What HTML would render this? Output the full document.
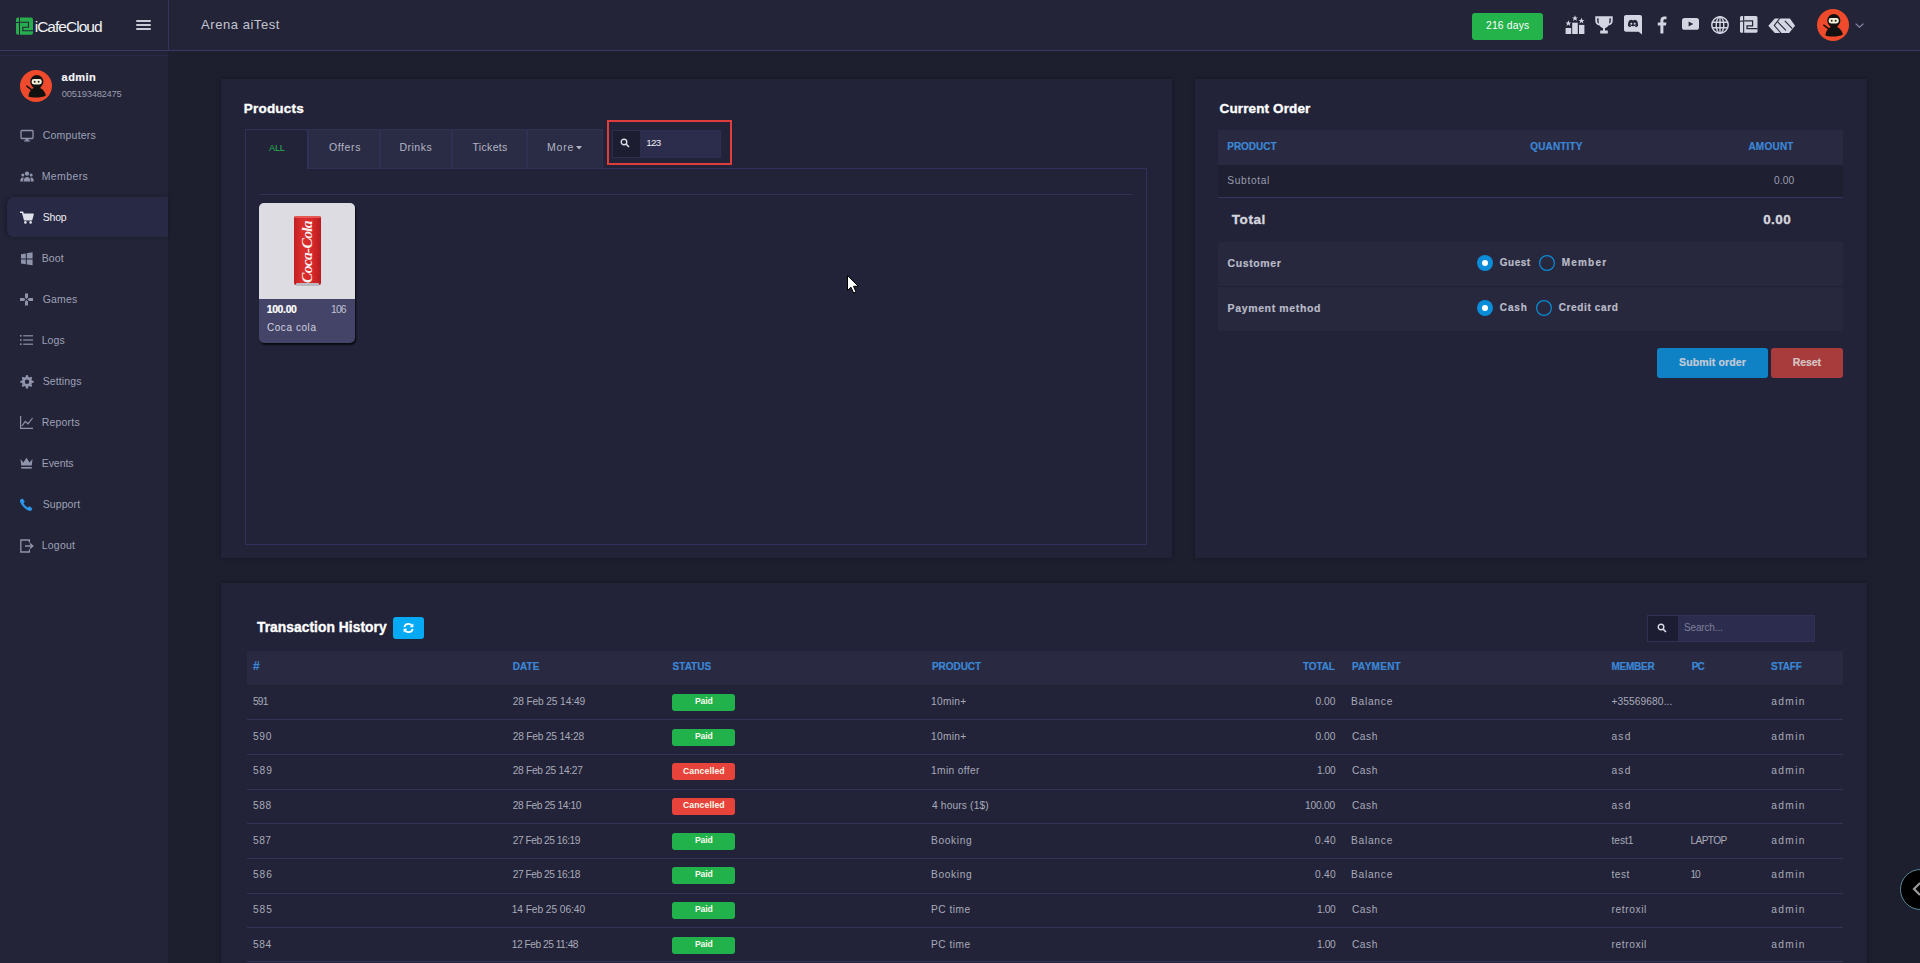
<!DOCTYPE html><html><head><meta charset="utf-8"><style>
html,body{margin:0;padding:0;width:1920px;height:963px;overflow:hidden;background:#1d1e2e;}
body{position:relative;font-family:"Liberation Sans",sans-serif;}
.t{position:absolute;white-space:nowrap;line-height:1;}
.r{position:absolute;box-sizing:border-box;}
svg{position:absolute;overflow:visible;}
</style></head><body>
<div class="r" style="left:0px;top:0px;width:1920px;height:50px;background:#232438;"></div>
<div class="r" style="left:0px;top:50px;width:1920px;height:1px;background:#393966;"></div>
<div class="r" style="left:168px;top:0px;width:1px;height:50px;background:#34335c;"></div>
<svg style="left:16px;top:17px" width="18" height="18" viewBox="0 0 18 18">
<rect x="0" y="0.5" width="17" height="17.3" rx="2" fill="#27ad4e"/>
<rect x="3" y="0" width="1" height="18" fill="#232438"/>
<rect x="0" y="5" width="3" height="1" fill="#232438"/>
<path d="M4 5.2 H12.5 V10.2 H6.8 V13.8 H17" fill="none" stroke="#232438" stroke-width="1.1"/>
</svg>
<div class="t" style="left:34.70px;top:19px;font-size:15.5px;font-weight:400;color:#f2f2f5;letter-spacing:-0.978px;">iCafeCloud</div>
<div class="r" style="left:136px;top:20px;width:15px;height:2px;background:#c9cbd6;border-radius:1px;"></div>
<div class="r" style="left:136px;top:24px;width:15px;height:2px;background:#c9cbd6;border-radius:1px;"></div>
<div class="r" style="left:136px;top:28px;width:15px;height:2px;background:#c9cbd6;border-radius:1px;"></div>
<div class="t" style="left:201.10px;top:18px;font-size:13px;font-weight:400;color:#c3c5d0;letter-spacing:0.545px;">Arena aiTest</div>
<div class="r" style="left:1472px;top:13px;width:71px;height:27px;background:#24b24b;border-radius:3px;"></div>
<div class="t" style="left:1486.00px;top:21px;font-size:10.3px;font-weight:400;color:#ffffff;letter-spacing:0.2px;">216 days</div>
<div class="r" style="left:0px;top:51px;width:168px;height:912px;background:#232438;"></div>
<div class="r" style="left:0px;top:51px;width:168px;height:4px;background:#212236;"></div>
<div class="r" style="left:0px;top:55px;width:168px;height:1px;background:#27284a;"></div>
<svg style="left:20px;top:70px" width="32" height="32" viewBox="0 0 32 32">
<circle cx="16" cy="16" r="16" fill="#ee4a2b"/>
<path d="M8.4 26.4 C9.2 20.6 12.4 17.6 16.9 17.6 C21.2 17.6 24.6 20.6 25.8 25.4 C22 27.8 12.5 28 8.4 26.4 Z" fill="#111"/><rect x="13.4" y="14.5" width="7" height="4.5" fill="#111"/>
<circle cx="16.8" cy="11.6" r="6.6" fill="#111"/>
<rect x="11.6" y="9" width="10.2" height="5.4" rx="2.4" fill="#f4efd9"/>
<circle cx="14.7" cy="11.8" r="1" fill="#222"/>
<circle cx="18.6" cy="11.8" r="1" fill="#222"/>
<path d="M6.8 16.2 L12.6 20.6" stroke="#111" stroke-width="1.5" stroke-linecap="round"/>
</svg>
<div class="t" style="left:61.60px;top:72px;font-size:11px;font-weight:700;color:#f5f5f8;letter-spacing:0.45px;-webkit-text-stroke:0.2px #f5f5f8;">admin</div>
<div class="t" style="left:61.80px;top:89px;font-size:9.4px;font-weight:400;color:#9a9cae;letter-spacing:-0.236px;">005193482475</div>
<div class="r" style="left:7px;top:197px;width:161px;height:40px;background:#282a45;border-radius:7px 0 0 7px;box-shadow:-1px 0 4px rgba(10,10,20,0.35);"></div>
<svg style="left:20px;top:128.5px" width="14" height="14" viewBox="0 0 14 14"><rect x="1" y="1.5" width="12" height="8" rx="0.8" fill="none" stroke="#8f93ab" stroke-width="1.3"/><path d="M5.5 10 V11.5 H4 V12.5 H10 V11.5 H8.5 V10" fill="#8f93ab"/></svg>
<div class="t" style="left:42.70px;top:130px;font-size:10.5px;font-weight:400;color:#9ea1b6;letter-spacing:0.225px;">Computers</div>
<svg style="left:20px;top:169.5px" width="14" height="14" viewBox="0 0 14 14"><circle cx="7" cy="3.6" r="2.2" fill="#8f93ab"/><circle cx="2.8" cy="5" r="1.5" fill="#8f93ab"/><circle cx="11.2" cy="5" r="1.5" fill="#8f93ab"/><path d="M3.6 11.5 C3.8 8.2 5.2 7 7 7 C8.8 7 10.2 8.2 10.4 11.5 Z" fill="#8f93ab"/><path d="M0.2 11.5 C0.3 9 1.2 7.6 2.8 7.6 C3.3 7.6 3.6 7.8 3.8 8 C3.2 9 3 10.2 3 11.5 Z" fill="#8f93ab"/><path d="M13.8 11.5 C13.7 9 12.8 7.6 11.2 7.6 C10.7 7.6 10.4 7.8 10.2 8 C10.8 9 11 10.2 11 11.5 Z" fill="#8f93ab"/></svg>
<div class="t" style="left:41.70px;top:171px;font-size:10.5px;font-weight:400;color:#9ea1b6;letter-spacing:0.4px;">Members</div>
<svg style="left:20px;top:210.5px" width="14" height="14" viewBox="0 0 14 14"><path d="M0 1.2 H2.6 L4.6 8.6 H11.6 L13 3.2 H3.6" fill="none" stroke="#dfe1ea" stroke-width="1.6" stroke-linejoin="round"/><path d="M3.4 3.2 H13 L11.6 8.6 H4.6 Z" fill="#dfe1ea"/><circle cx="5.4" cy="11.4" r="1.3" fill="#dfe1ea"/><circle cx="10.6" cy="11.4" r="1.3" fill="#dfe1ea"/></svg>
<div class="t" style="left:42.70px;top:212px;font-size:10.5px;font-weight:400;color:#ecedf2;letter-spacing:-0.2px;">Shop</div>
<svg style="left:20px;top:251.5px" width="14" height="14" viewBox="0 0 14 14"><path d="M1 2.2 L5.8 1.4 V6.4 H1 Z M6.8 1.2 L12.6 0.3 V6.4 H6.8 Z M1 7.4 H5.8 V12.2 L1 11.4 Z M6.8 7.4 H12.6 V13.2 L6.8 12.4 Z" fill="#8f93ab"/></svg>
<div class="t" style="left:41.70px;top:253px;font-size:10.5px;font-weight:400;color:#9ea1b6;letter-spacing:0.133px;">Boot</div>
<svg style="left:20px;top:292.5px" width="14" height="14" viewBox="0 0 14 14"><path d="M5 0.5 H8 V4.5 L6.5 6 L5 4.5 Z M5 12.5 H8 V8.5 L6.5 7 L5 8.5 Z M0 5 V8 H4 L5.5 6.5 L4 5 Z M13 5 V8 H9 L7.5 6.5 L9 5 Z" fill="#8f93ab"/></svg>
<div class="t" style="left:42.70px;top:294px;font-size:10.5px;font-weight:400;color:#9ea1b6;letter-spacing:0.15px;">Games</div>
<svg style="left:20px;top:333.5px" width="14" height="14" viewBox="0 0 14 14"><rect x="0" y="1" width="1.6" height="1.6" fill="#8f93ab"/><rect x="0" y="5.2" width="1.6" height="1.6" fill="#8f93ab"/><rect x="0" y="9.4" width="1.6" height="1.6" fill="#8f93ab"/><rect x="3.2" y="1.2" width="9.8" height="1.2" fill="#8f93ab"/><rect x="3.2" y="5.4" width="9.8" height="1.2" fill="#8f93ab"/><rect x="3.2" y="9.6" width="9.8" height="1.2" fill="#8f93ab"/></svg>
<div class="t" style="left:41.70px;top:335px;font-size:10.5px;font-weight:400;color:#9ea1b6;letter-spacing:0.067px;">Logs</div>
<svg style="left:20px;top:374.5px" width="14" height="14" viewBox="0 0 14 14"><path d="M6.5 0 L8 0.2 L8.4 2 L9.6 2.6 L11.2 1.7 L12.3 2.8 L11.4 4.4 L12 5.6 L13.8 6 V7.6 L12 8 L11.4 9.2 L12.3 10.8 L11.2 11.9 L9.6 11 L8.4 11.6 L8 13.4 H6 L5.6 11.6 L4.4 11 L2.8 11.9 L1.7 10.8 L2.6 9.2 L2 8 L0.2 7.6 V6 L2 5.6 L2.6 4.4 L1.7 2.8 L2.8 1.7 L4.4 2.6 L5.6 2 L6 0.2 Z M7 4.6 A2.2 2.2 0 1 0 7 9 A2.2 2.2 0 1 0 7 4.6 Z" fill="#8f93ab" fill-rule="evenodd"/></svg>
<div class="t" style="left:42.70px;top:376px;font-size:10.5px;font-weight:400;color:#9ea1b6;letter-spacing:0.114px;">Settings</div>
<svg style="left:20px;top:415.5px" width="14" height="14" viewBox="0 0 14 14"><path d="M0.6 0 V12.4 H13" fill="none" stroke="#8f93ab" stroke-width="1.2"/><path d="M2 10 L5.2 5.4 L8 7.8 L12.6 2" fill="none" stroke="#8f93ab" stroke-width="1.2"/></svg>
<div class="t" style="left:41.70px;top:417px;font-size:10.5px;font-weight:400;color:#9ea1b6;letter-spacing:0.2px;">Reports</div>
<svg style="left:20px;top:456.5px" width="14" height="14" viewBox="0 0 14 14"><path d="M0.5 2 L3.4 5.4 L6.5 0.8 L9.6 5.4 L12.5 2 L11.8 8.6 H1.2 Z" fill="#8f93ab"/><rect x="1.2" y="10" width="10.6" height="1.6" fill="#8f93ab"/></svg>
<div class="t" style="left:41.70px;top:458px;font-size:10.5px;font-weight:400;color:#9ea1b6;letter-spacing:-0.04px;">Events</div>
<svg style="left:20px;top:497.5px" width="14" height="14" viewBox="0 0 14 14"><path d="M2.6 0.6 L4.8 3.6 L3.6 5.2 C4.4 7 6 8.6 7.8 9.4 L9.4 8.2 L12.4 10.4 L11.4 12.6 C10.8 13.2 9.6 13.2 8.4 12.6 C5 11 2 8 0.4 4.6 C-0.2 3.4 -0.2 2.2 0.4 1.6 Z" fill="#2d95ea"/></svg>
<div class="t" style="left:42.70px;top:499px;font-size:10.5px;font-weight:400;color:#9ea1b6;letter-spacing:0.1px;">Support</div>
<svg style="left:20px;top:538.5px" width="14" height="14" viewBox="0 0 14 14"><path d="M9.4 3.6 V1 H0.8 V13 H9.4 V10.4" fill="none" stroke="#8f93ab" stroke-width="1.3"/><path d="M5 7 H12.6 M10 4.4 L12.8 7 L10 9.6" fill="none" stroke="#8f93ab" stroke-width="1.4"/></svg>
<div class="t" style="left:41.70px;top:540px;font-size:10.5px;font-weight:400;color:#9ea1b6;letter-spacing:0.24px;">Logout</div>
<div class="r" style="left:221px;top:78.5px;width:951px;height:479.5px;background:#222338;box-shadow:0 0 4px rgba(8,8,16,0.35);"></div>
<div class="t" style="left:243.80px;top:102px;font-size:13.5px;font-weight:700;color:#ffffff;letter-spacing:0.2px;-webkit-text-stroke:0.35px #ffffff;">Products</div>
<div class="r" style="left:245px;top:168px;width:902px;height:377px;background:transparent;border:1px solid #30305a;border-top:none;"></div>
<div class="r" style="left:308px;top:168px;width:839px;height:1px;background:#30305a;"></div>
<div class="r" style="left:245px;top:129px;width:63px;height:40px;background:#222338;border:1px solid #30305a;border-bottom:none;"></div>
<div class="t" style="left:269.00px;top:144px;font-size:9.2px;font-weight:400;color:#27b34d;letter-spacing:-0.2px;">ALL</div>
<div class="r" style="left:308px;top:129px;width:72px;height:40px;background:#2a2c45;border:1px solid #2f3150;"></div>
<div class="r" style="left:380px;top:129px;width:72px;height:40px;background:#2a2c45;border:1px solid #2f3150;"></div>
<div class="r" style="left:452px;top:129px;width:75px;height:40px;background:#2a2c45;border:1px solid #2f3150;"></div>
<div class="r" style="left:527px;top:129px;width:76px;height:40px;background:#2a2c45;border:1px solid #2f3150;"></div>
<div class="t" style="left:329.00px;top:142px;font-size:10.5px;font-weight:400;color:#b3b5c4;letter-spacing:0.6px;">Offers</div>
<div class="t" style="left:399.40px;top:142px;font-size:10.5px;font-weight:400;color:#b3b5c4;letter-spacing:0.52px;">Drinks</div>
<div class="t" style="left:472.50px;top:142px;font-size:10.5px;font-weight:400;color:#b3b5c4;letter-spacing:0.333px;">Tickets</div>
<div class="t" style="left:547.00px;top:142px;font-size:10.5px;font-weight:400;color:#b3b5c4;letter-spacing:0.8px;">More</div>
<svg style="left:576px;top:146px" width="6" height="4" viewBox="0 0 6 4"><path d="M0 0 H6 L3 3.4 Z" fill="#b3b5c4"/></svg>
<div class="r" style="left:607px;top:120px;width:125px;height:44.5px;background:transparent;border:2px solid #e03c3c;"></div>
<div class="r" style="left:612px;top:129.5px;width:28px;height:28px;background:#1c1d31;border:1px solid #2e2f50;border-right:none;"></div>
<div class="r" style="left:640px;top:129.5px;width:80.5px;height:28px;background:#2c2d4d;border:1px solid #2e2f50;border-left:none;"></div>
<svg style="left:620px;top:138px" width="10" height="10" viewBox="0 0 10 10"><circle cx="4" cy="4" r="2.8" fill="none" stroke="#d9dbe6" stroke-width="1.4"/><path d="M6.1 6.1 L9 9" stroke="#d9dbe6" stroke-width="1.6"/></svg>
<div class="t" style="left:646.20px;top:138px;font-size:9.8px;font-weight:400;color:#f0f0f4;letter-spacing:-0.7px;">123</div>
<div class="r" style="left:259px;top:194px;width:874px;height:1px;background:#2f3053;"></div>
<div class="r" style="left:259px;top:203px;width:96px;height:140px;border-radius:5px;overflow:hidden;box-shadow:1px 2px 2px rgba(0,0,0,0.75);background:#434467;"></div>
<div class="r" style="left:259px;top:203px;width:96px;height:96px;background:#dcdce2;border-radius:5px 5px 0 0;"></div>
<svg style="left:293.5px;top:216px" width="27" height="70" viewBox="0 0 27 70">
<defs><linearGradient id="cg" x1="0" x2="1" y1="0" y2="0"><stop offset="0" stop-color="#c21e22"/><stop offset="0.3" stop-color="#dc2e2c"/><stop offset="0.7" stop-color="#d6282a"/><stop offset="1" stop-color="#b81a1e"/></linearGradient></defs>
<rect x="0" y="0" width="27" height="69" rx="2" fill="url(#cg)"/>
<rect x="0.5" y="0" width="26" height="2" rx="1" fill="#e65a55"/>
<rect x="2" y="67" width="23" height="3" rx="1" fill="#b9b9c2"/>
</svg>
<div class="t" style="left:267px;top:244px;width:80px;height:16px;transform:rotate(-90deg);transform-origin:40px 8px;font-family:'Liberation Serif',serif;font-style:italic;font-weight:700;font-size:15.5px;line-height:16px;letter-spacing:-0.7px;color:#f6f0f0;text-align:center;">Coca-Cola</div>
<div class="t" style="left:266.70px;top:305px;font-size:10.4px;font-weight:700;color:#ffffff;letter-spacing:-0.32px;-webkit-text-stroke:0.2px #ffffff;">100.00</div>
<div class="t" style="left:331.00px;top:305px;font-size:10.4px;font-weight:400;color:#c0c2d2;letter-spacing:-0.9px;">106</div>
<div class="t" style="left:266.90px;top:323px;font-size:10px;font-weight:400;color:#d2d4e0;letter-spacing:0.575px;">Coca cola</div>
<div class="r" style="left:1195px;top:78.5px;width:672px;height:479.5px;background:#222338;box-shadow:0 0 4px rgba(8,8,16,0.35);"></div>
<div class="t" style="left:1219.60px;top:102px;font-size:13.5px;font-weight:700;color:#ffffff;letter-spacing:0.117px;-webkit-text-stroke:0.35px #ffffff;">Current Order</div>
<div class="r" style="left:1218px;top:129.5px;width:625px;height:35.5px;background:#292a42;"></div>
<div class="t" style="left:1227.30px;top:142px;font-size:10px;font-weight:700;color:#3b87d6;letter-spacing:-0.033px;-webkit-text-stroke:0.2px #3b87d6;">PRODUCT</div>
<div class="t" style="left:1530.20px;top:142px;font-size:10px;font-weight:700;color:#3b87d6;letter-spacing:0.171px;-webkit-text-stroke:0.2px #3b87d6;">QUANTITY</div>
<div class="t" style="left:1748.40px;top:142px;font-size:10px;font-weight:700;color:#3b87d6;letter-spacing:0.24px;-webkit-text-stroke:0.2px #3b87d6;">AMOUNT</div>
<div class="r" style="left:1218px;top:165px;width:625px;height:32px;background:#1e1f31;"></div>
<div class="r" style="left:1218px;top:197px;width:625px;height:1px;background:#363760;"></div>
<div class="t" style="left:1227.30px;top:176px;font-size:10.2px;font-weight:400;color:#9a9cae;letter-spacing:0.657px;">Subtotal</div>
<div class="t" style="left:1774.00px;top:176px;font-size:10.2px;font-weight:400;color:#9a9cae;letter-spacing:0.133px;">0.00</div>
<div class="t" style="left:1231.80px;top:213px;font-size:13.5px;font-weight:700;color:#d4d5de;letter-spacing:0.55px;-webkit-text-stroke:0.35px #d4d5de;">Total</div>
<div class="t" style="left:1763.20px;top:213px;font-size:13.5px;font-weight:700;color:#d4d5de;letter-spacing:0.4px;-webkit-text-stroke:0.35px #d4d5de;">0.00</div>
<div class="r" style="left:1218px;top:242px;width:625px;height:89px;background:#27283d;"></div>
<div class="r" style="left:1218px;top:286px;width:625px;height:1px;background:#1f2033;"></div>
<div class="t" style="left:1227.60px;top:258px;font-size:10.5px;font-weight:700;color:#b9bbc8;letter-spacing:0.6px;-webkit-text-stroke:0.2px #b9bbc8;">Customer</div>
<div class="t" style="left:1227.60px;top:303px;font-size:10.5px;font-weight:700;color:#b9bbc8;letter-spacing:0.631px;-webkit-text-stroke:0.2px #b9bbc8;">Payment method</div>
<svg style="left:1477px;top:255px" width="16" height="16" viewBox="0 0 16 16"><circle cx="8" cy="8" r="8" fill="#0b8cd8"/><circle cx="8" cy="8" r="3" fill="#fff"/></svg>
<svg style="left:1538.8px;top:255px" width="16" height="16" viewBox="0 0 16 16"><circle cx="8" cy="8" r="7.4" fill="none" stroke="#0b8cd8" stroke-width="1.2"/></svg>
<svg style="left:1477px;top:300px" width="16" height="16" viewBox="0 0 16 16"><circle cx="8" cy="8" r="8" fill="#0b8cd8"/><circle cx="8" cy="8" r="3" fill="#fff"/></svg>
<svg style="left:1535.8px;top:300px" width="16" height="16" viewBox="0 0 16 16"><circle cx="8" cy="8" r="7.4" fill="none" stroke="#0b8cd8" stroke-width="1.2"/></svg>
<div class="t" style="left:1499.80px;top:258px;font-size:10px;font-weight:700;color:#b9bbc8;letter-spacing:0.5px;-webkit-text-stroke:0.2px #b9bbc8;">Guest</div>
<div class="t" style="left:1561.70px;top:258px;font-size:10px;font-weight:700;color:#b9bbc8;letter-spacing:1.2px;-webkit-text-stroke:0.2px #b9bbc8;">Member</div>
<div class="t" style="left:1499.80px;top:303px;font-size:10px;font-weight:700;color:#b9bbc8;letter-spacing:0.867px;-webkit-text-stroke:0.2px #b9bbc8;">Cash</div>
<div class="t" style="left:1558.75px;top:303px;font-size:10px;font-weight:700;color:#b9bbc8;letter-spacing:0.63px;-webkit-text-stroke:0.2px #b9bbc8;">Credit card</div>
<div class="r" style="left:1657px;top:348px;width:111px;height:30px;background:#0f82c6;border-radius:3px;"></div>
<div class="r" style="left:1771px;top:348px;width:72px;height:30px;background:#a83b3b;border-radius:3px;"></div>
<div class="t" style="left:1679.00px;top:357px;font-size:10.5px;font-weight:700;color:#c5cbd6;letter-spacing:0.145px;-webkit-text-stroke:0.2px #c5cbd6;">Submit order</div>
<div class="t" style="left:1792.70px;top:357px;font-size:10.5px;font-weight:700;color:#d6c6c6;letter-spacing:-0.1px;-webkit-text-stroke:0.2px #d6c6c6;">Reset</div>
<div class="r" style="left:221px;top:582.5px;width:1646px;height:420px;background:#222338;box-shadow:0 0 4px rgba(8,8,16,0.35);"></div>
<div class="t" style="left:257.00px;top:621px;font-size:13.8px;font-weight:700;color:#ffffff;letter-spacing:0.044px;-webkit-text-stroke:0.35px #ffffff;">Transaction History</div>
<div class="r" style="left:393px;top:617px;width:31px;height:22px;background:#05a9f4;border-radius:3px;"></div>
<svg style="left:403px;top:623px" width="11" height="10" viewBox="0 0 11 10">
<path d="M1.3 4 C1.8 1.8 3.4 0.8 5.4 0.8 C6.8 0.8 7.9 1.4 8.8 2.4" fill="none" stroke="#fff" stroke-width="1.7"/>
<path d="M10.4 0.4 V4.2 H6.6 Z" fill="#fff"/>
<path d="M9.7 6 C9.2 8.2 7.6 9.2 5.6 9.2 C4.2 9.2 3.1 8.6 2.2 7.6" fill="none" stroke="#fff" stroke-width="1.7"/>
<path d="M0.6 9.6 V5.8 H4.4 Z" fill="#fff"/>
</svg>
<div class="r" style="left:1647px;top:614.5px;width:168px;height:27px;background:#2c2d4e;border:1px solid #303153;"></div>
<div class="r" style="left:1647px;top:614.5px;width:31px;height:27px;background:#1c1d32;border:1px solid #303153;border-right:none;"></div>
<svg style="left:1657px;top:623px" width="10" height="10" viewBox="0 0 10 10"><circle cx="4" cy="4" r="2.8" fill="none" stroke="#d9dbe6" stroke-width="1.4"/><path d="M6.1 6.1 L9 9" stroke="#d9dbe6" stroke-width="1.6"/></svg>
<div class="t" style="left:1684.00px;top:623px;font-size:10px;font-weight:400;color:#7d7f98;letter-spacing:-0.15px;">Search...</div>
<div class="r" style="left:246.5px;top:650.5px;width:1596.5px;height:35px;background:#292a41;"></div>
<div class="r" style="left:246.5px;top:684.5px;width:1596.5px;height:1px;background:#1f2032;"></div>
<div class="t" style="left:253.00px;top:660px;font-size:12px;font-weight:700;color:#3b87d6;letter-spacing:3.0px;-webkit-text-stroke:0.2px #3b87d6;">#</div>
<div class="t" style="left:512.70px;top:662px;font-size:10px;font-weight:700;color:#3b87d6;letter-spacing:0.067px;-webkit-text-stroke:0.2px #3b87d6;">DATE</div>
<div class="t" style="left:672.60px;top:662px;font-size:10px;font-weight:700;color:#3b87d6;-webkit-text-stroke:0.2px #3b87d6;">STATUS</div>
<div class="t" style="left:931.90px;top:662px;font-size:10px;font-weight:700;color:#3b87d6;letter-spacing:-0.033px;-webkit-text-stroke:0.2px #3b87d6;">PRODUCT</div>
<div class="t" style="left:1303.10px;top:662px;font-size:10px;font-weight:700;color:#3b87d6;letter-spacing:-0.15px;-webkit-text-stroke:0.2px #3b87d6;">TOTAL</div>
<div class="t" style="left:1351.90px;top:662px;font-size:10px;font-weight:700;color:#3b87d6;letter-spacing:0.267px;-webkit-text-stroke:0.2px #3b87d6;">PAYMENT</div>
<div class="t" style="left:1611.50px;top:662px;font-size:10px;font-weight:700;color:#3b87d6;letter-spacing:-0.24px;-webkit-text-stroke:0.2px #3b87d6;">MEMBER</div>
<div class="t" style="left:1691.70px;top:662px;font-size:10px;font-weight:700;color:#3b87d6;letter-spacing:-0.8px;-webkit-text-stroke:0.2px #3b87d6;">PC</div>
<div class="t" style="left:1771.00px;top:662px;font-size:10px;font-weight:700;color:#3b87d6;letter-spacing:-0.15px;-webkit-text-stroke:0.2px #3b87d6;">STAFF</div>
<div class="t" style="left:253.00px;top:697px;font-size:10.2px;font-weight:400;color:#a8aab8;letter-spacing:-0.8px;">591</div>
<div class="t" style="left:512.70px;top:697px;font-size:10.2px;font-weight:400;color:#a8aab8;letter-spacing:-0.129px;">28 Feb 25 14:49</div>
<div class="r" style="left:672px;top:694.0px;width:63px;height:17px;background:#22b24c;border-radius:3px;"></div>
<div class="t" style="left:694.90px;top:697px;font-size:8.6px;font-weight:700;color:#fbfbee;letter-spacing:-0.067px;">Paid</div>
<div class="t" style="left:931.00px;top:697px;font-size:10.2px;font-weight:400;color:#a8aab8;letter-spacing:0.28px;">10min+</div>
<div class="t" style="left:1315.40px;top:697px;font-size:10.2px;font-weight:400;color:#a8aab8;letter-spacing:0.067px;">0.00</div>
<div class="t" style="left:1350.90px;top:697px;font-size:10.2px;font-weight:400;color:#a8aab8;letter-spacing:0.767px;">Balance</div>
<div class="t" style="left:1611.40px;top:697px;font-size:10.2px;font-weight:400;color:#a8aab8;letter-spacing:0.109px;">+35569680...</div>
<div class="t" style="left:1771.30px;top:697px;font-size:10.2px;font-weight:400;color:#a8aab8;letter-spacing:1.35px;">admin</div>
<div class="r" style="left:246.5px;top:719px;width:1596.5px;height:1px;background:#33345a;"></div>
<div class="t" style="left:253.00px;top:732px;font-size:10.2px;font-weight:400;color:#a8aab8;letter-spacing:0.7px;">590</div>
<div class="t" style="left:512.70px;top:732px;font-size:10.2px;font-weight:400;color:#a8aab8;letter-spacing:-0.2px;">28 Feb 25 14:28</div>
<div class="r" style="left:672px;top:728.6px;width:63px;height:17px;background:#22b24c;border-radius:3px;"></div>
<div class="t" style="left:694.90px;top:732px;font-size:8.6px;font-weight:700;color:#fbfbee;letter-spacing:-0.067px;">Paid</div>
<div class="t" style="left:931.00px;top:732px;font-size:10.2px;font-weight:400;color:#a8aab8;letter-spacing:0.28px;">10min+</div>
<div class="t" style="left:1315.40px;top:732px;font-size:10.2px;font-weight:400;color:#a8aab8;letter-spacing:0.067px;">0.00</div>
<div class="t" style="left:1351.90px;top:732px;font-size:10.2px;font-weight:400;color:#a8aab8;letter-spacing:0.6px;">Cash</div>
<div class="t" style="left:1611.40px;top:732px;font-size:10.2px;font-weight:400;color:#a8aab8;letter-spacing:1.3px;">asd</div>
<div class="t" style="left:1771.30px;top:732px;font-size:10.2px;font-weight:400;color:#a8aab8;letter-spacing:1.35px;">admin</div>
<div class="r" style="left:246.5px;top:754px;width:1596.5px;height:1px;background:#33345a;"></div>
<div class="t" style="left:253.00px;top:766px;font-size:10.2px;font-weight:400;color:#a8aab8;letter-spacing:0.9px;">589</div>
<div class="t" style="left:512.70px;top:766px;font-size:10.2px;font-weight:400;color:#a8aab8;letter-spacing:-0.286px;">28 Feb 25 14:27</div>
<div class="r" style="left:672px;top:763.3px;width:63px;height:17px;background:#e7433a;border-radius:3px;"></div>
<div class="t" style="left:683.00px;top:767px;font-size:8.6px;font-weight:700;color:#fbfbee;letter-spacing:0.125px;">Cancelled</div>
<div class="t" style="left:931.00px;top:766px;font-size:10.2px;font-weight:400;color:#a8aab8;letter-spacing:0.378px;">1min offer</div>
<div class="t" style="left:1317.10px;top:766px;font-size:10.2px;font-weight:400;color:#a8aab8;letter-spacing:-0.4px;">1.00</div>
<div class="t" style="left:1351.90px;top:766px;font-size:10.2px;font-weight:400;color:#a8aab8;letter-spacing:0.6px;">Cash</div>
<div class="t" style="left:1611.40px;top:766px;font-size:10.2px;font-weight:400;color:#a8aab8;letter-spacing:1.3px;">asd</div>
<div class="t" style="left:1771.30px;top:766px;font-size:10.2px;font-weight:400;color:#a8aab8;letter-spacing:1.35px;">admin</div>
<div class="r" style="left:246.5px;top:789px;width:1596.5px;height:1px;background:#33345a;"></div>
<div class="t" style="left:253.00px;top:801px;font-size:10.2px;font-weight:400;color:#a8aab8;letter-spacing:0.6px;">588</div>
<div class="t" style="left:512.70px;top:801px;font-size:10.2px;font-weight:400;color:#a8aab8;letter-spacing:-0.386px;">28 Feb 25 14:10</div>
<div class="r" style="left:672px;top:798.0px;width:63px;height:17px;background:#e7433a;border-radius:3px;"></div>
<div class="t" style="left:683.00px;top:801px;font-size:8.6px;font-weight:700;color:#fbfbee;letter-spacing:0.125px;">Cancelled</div>
<div class="t" style="left:932.00px;top:801px;font-size:10.2px;font-weight:400;color:#a8aab8;letter-spacing:0.164px;">4 hours (1$)</div>
<div class="t" style="left:1305.10px;top:801px;font-size:10.2px;font-weight:400;color:#a8aab8;letter-spacing:-0.24px;">100.00</div>
<div class="t" style="left:1351.90px;top:801px;font-size:10.2px;font-weight:400;color:#a8aab8;letter-spacing:0.6px;">Cash</div>
<div class="t" style="left:1611.40px;top:801px;font-size:10.2px;font-weight:400;color:#a8aab8;letter-spacing:1.3px;">asd</div>
<div class="t" style="left:1771.30px;top:801px;font-size:10.2px;font-weight:400;color:#a8aab8;letter-spacing:1.35px;">admin</div>
<div class="r" style="left:246.5px;top:823px;width:1596.5px;height:1px;background:#33345a;"></div>
<div class="t" style="left:253.00px;top:836px;font-size:10.2px;font-weight:400;color:#a8aab8;letter-spacing:0.5px;">587</div>
<div class="t" style="left:512.70px;top:836px;font-size:10.2px;font-weight:400;color:#a8aab8;letter-spacing:-0.457px;">27 Feb 25 16:19</div>
<div class="r" style="left:672px;top:832.6px;width:63px;height:17px;background:#22b24c;border-radius:3px;"></div>
<div class="t" style="left:694.90px;top:836px;font-size:8.6px;font-weight:700;color:#fbfbee;letter-spacing:-0.067px;">Paid</div>
<div class="t" style="left:931.00px;top:836px;font-size:10.2px;font-weight:400;color:#a8aab8;letter-spacing:0.633px;">Booking</div>
<div class="t" style="left:1315.10px;top:836px;font-size:10.2px;font-weight:400;color:#a8aab8;letter-spacing:0.267px;">0.40</div>
<div class="t" style="left:1350.90px;top:836px;font-size:10.2px;font-weight:400;color:#a8aab8;letter-spacing:0.767px;">Balance</div>
<div class="t" style="left:1611.40px;top:836px;font-size:10.2px;font-weight:400;color:#a8aab8;">test1</div>
<div class="t" style="left:1690.50px;top:836px;font-size:10.2px;font-weight:400;color:#a8aab8;letter-spacing:-0.64px;">LAPTOP</div>
<div class="t" style="left:1771.30px;top:836px;font-size:10.2px;font-weight:400;color:#a8aab8;letter-spacing:1.35px;">admin</div>
<div class="r" style="left:246.5px;top:858px;width:1596.5px;height:1px;background:#33345a;"></div>
<div class="t" style="left:253.00px;top:870px;font-size:10.2px;font-weight:400;color:#a8aab8;letter-spacing:0.9px;">586</div>
<div class="t" style="left:512.70px;top:870px;font-size:10.2px;font-weight:400;color:#a8aab8;letter-spacing:-0.457px;">27 Feb 25 16:18</div>
<div class="r" style="left:672px;top:867.2px;width:63px;height:17px;background:#22b24c;border-radius:3px;"></div>
<div class="t" style="left:694.90px;top:870px;font-size:8.6px;font-weight:700;color:#fbfbee;letter-spacing:-0.067px;">Paid</div>
<div class="t" style="left:931.00px;top:870px;font-size:10.2px;font-weight:400;color:#a8aab8;letter-spacing:0.633px;">Booking</div>
<div class="t" style="left:1315.10px;top:870px;font-size:10.2px;font-weight:400;color:#a8aab8;letter-spacing:0.267px;">0.40</div>
<div class="t" style="left:1350.90px;top:870px;font-size:10.2px;font-weight:400;color:#a8aab8;letter-spacing:0.767px;">Balance</div>
<div class="t" style="left:1611.40px;top:870px;font-size:10.2px;font-weight:400;color:#a8aab8;letter-spacing:0.533px;">test</div>
<div class="t" style="left:1690.50px;top:870px;font-size:10.2px;font-weight:400;color:#a8aab8;letter-spacing:-1.2px;">10</div>
<div class="t" style="left:1771.30px;top:870px;font-size:10.2px;font-weight:400;color:#a8aab8;letter-spacing:1.35px;">admin</div>
<div class="r" style="left:246.5px;top:893px;width:1596.5px;height:1px;background:#33345a;"></div>
<div class="t" style="left:253.00px;top:905px;font-size:10.2px;font-weight:400;color:#a8aab8;letter-spacing:0.9px;">585</div>
<div class="t" style="left:511.70px;top:905px;font-size:10.2px;font-weight:400;color:#a8aab8;letter-spacing:-0.057px;">14 Feb 25 06:40</div>
<div class="r" style="left:672px;top:901.9px;width:63px;height:17px;background:#22b24c;border-radius:3px;"></div>
<div class="t" style="left:694.90px;top:905px;font-size:8.6px;font-weight:700;color:#fbfbee;letter-spacing:-0.067px;">Paid</div>
<div class="t" style="left:931.00px;top:905px;font-size:10.2px;font-weight:400;color:#a8aab8;letter-spacing:0.5px;">PC time</div>
<div class="t" style="left:1317.10px;top:905px;font-size:10.2px;font-weight:400;color:#a8aab8;letter-spacing:-0.4px;">1.00</div>
<div class="t" style="left:1351.90px;top:905px;font-size:10.2px;font-weight:400;color:#a8aab8;letter-spacing:0.6px;">Cash</div>
<div class="t" style="left:1611.40px;top:905px;font-size:10.2px;font-weight:400;color:#a8aab8;letter-spacing:0.629px;">retroxil</div>
<div class="t" style="left:1771.30px;top:905px;font-size:10.2px;font-weight:400;color:#a8aab8;letter-spacing:1.35px;">admin</div>
<div class="r" style="left:246.5px;top:927px;width:1596.5px;height:1px;background:#33345a;"></div>
<div class="t" style="left:253.00px;top:940px;font-size:10.2px;font-weight:400;color:#a8aab8;letter-spacing:0.6px;">584</div>
<div class="t" style="left:511.70px;top:940px;font-size:10.2px;font-weight:400;color:#a8aab8;letter-spacing:-0.471px;">12 Feb 25 11:48</div>
<div class="r" style="left:672px;top:936.5px;width:63px;height:17px;background:#22b24c;border-radius:3px;"></div>
<div class="t" style="left:694.90px;top:940px;font-size:8.6px;font-weight:700;color:#fbfbee;letter-spacing:-0.067px;">Paid</div>
<div class="t" style="left:931.00px;top:940px;font-size:10.2px;font-weight:400;color:#a8aab8;letter-spacing:0.5px;">PC time</div>
<div class="t" style="left:1317.10px;top:940px;font-size:10.2px;font-weight:400;color:#a8aab8;letter-spacing:-0.4px;">1.00</div>
<div class="t" style="left:1351.90px;top:940px;font-size:10.2px;font-weight:400;color:#a8aab8;letter-spacing:0.6px;">Cash</div>
<div class="t" style="left:1611.40px;top:940px;font-size:10.2px;font-weight:400;color:#a8aab8;letter-spacing:0.629px;">retroxil</div>
<div class="t" style="left:1771.30px;top:940px;font-size:10.2px;font-weight:400;color:#a8aab8;letter-spacing:1.35px;">admin</div>
<div class="r" style="left:246.5px;top:961px;width:1596.5px;height:1px;background:#33345a;"></div>
<div class="r" style="left:1900px;top:868.5px;width:41px;height:41px;border-radius:50%;background:#000;border:1px solid #5a8a9a;"></div>
<svg style="left:1912px;top:882px" width="10" height="14" viewBox="0 0 10 14"><path d="M8 1 L2 7 L8 13" fill="none" stroke="#9a9a9a" stroke-width="2.2"/></svg>
<svg style="left:1565px;top:15px" width="20" height="19" viewBox="0 0 20 19">
<rect x="0.6" y="13" width="5.6" height="6" fill="#d3d5e2"/>
<rect x="7.2" y="7.7" width="5.6" height="11.3" fill="#d3d5e2"/>
<rect x="14" y="9.9" width="5.4" height="9.1" fill="#d3d5e2"/>
<path d="M0 -3 L0.9 -0.9 L3 -0.9 L1.3 0.4 L1.9 2.6 L0 1.3 L-1.9 2.6 L-1.3 0.4 L-3 -0.9 L-0.9 -0.9 Z" fill="#d3d5e2" transform="translate(3.4 8.3)"/>
<path d="M0 -3 L0.9 -0.9 L3 -0.9 L1.3 0.4 L1.9 2.6 L0 1.3 L-1.9 2.6 L-1.3 0.4 L-3 -0.9 L-0.9 -0.9 Z" fill="#d3d5e2" transform="translate(10 3.3)"/>
<path d="M0 -3 L0.9 -0.9 L3 -0.9 L1.3 0.4 L1.9 2.6 L0 1.3 L-1.9 2.6 L-1.3 0.4 L-3 -0.9 L-0.9 -0.9 Z" fill="#d3d5e2" transform="translate(16.5 5.8)"/>
</svg>
<svg style="left:1595px;top:15.5px" width="18" height="18" viewBox="0 0 18 18">
<path d="M0.3 0.3 H17.7 V5 C17.7 7.6 16 9.2 13.4 9.6 C12.6 11 11.2 12 10 12.3 V14.6 H12.8 V17.6 H5.2 V14.6 H8 V12.3 C6.8 12 5.4 11 4.6 9.6 C2 9.2 0.3 7.6 0.3 5 Z M2.2 2.2 V5 C2.2 6.4 3 7.4 4 7.6 C3.6 6.4 3.6 4 3.6 2.2 Z M15.8 2.2 H14.4 C14.4 4 14.4 6.4 14 7.6 C15 7.4 15.8 6.4 15.8 5 Z" fill="#d3d5e2" fill-rule="evenodd"/>
</svg>
<svg style="left:1624px;top:15px" width="18" height="20" viewBox="0 0 18 20">
<path d="M2 0 H16 C17.1 0 18 0.9 18 2 V19.6 L14.6 16.8 H2 C0.9 16.8 0 15.9 0 14.8 V2 C0 0.9 0.9 0 2 0 Z" fill="#d3d5e2"/>
<path d="M5.2 5.6 C6.2 5 7.2 4.8 7.6 4.8 L7.9 5.3 C8.6 5.2 9.4 5.2 10.1 5.3 L10.4 4.8 C10.8 4.8 11.8 5 12.8 5.6 C13.8 7.2 14.2 9 14 11 C13.2 11.6 12.4 12 11.6 12.2 L11 11.3 C11.4 11.2 11.8 11 12.1 10.8 L11.9 10.6 C10 11.4 8 11.4 6.1 10.6 L5.9 10.8 C6.2 11 6.6 11.2 7 11.3 L6.4 12.2 C5.6 12 4.8 11.6 4 11 C3.8 9 4.2 7.2 5.2 5.6 Z" fill="#232438"/>
<circle cx="7.3" cy="8.7" r="1" fill="#d3d5e2"/><circle cx="10.7" cy="8.7" r="1" fill="#d3d5e2"/>
</svg>
<svg style="left:1657px;top:15.8px" width="10" height="18" viewBox="0 0 10 18">
<path d="M6.4 17.4 V9.6 H9 L9.4 6.6 H6.4 V4.8 C6.4 3.9 6.7 3.3 8 3.3 H9.5 V0.6 C9.2 0.5 8.3 0.4 7.2 0.4 C5 0.4 3.4 1.8 3.4 4.3 V6.6 H0.8 V9.6 H3.4 V17.4 Z" fill="#d3d5e2"/>
</svg>
<svg style="left:1682.4px;top:18.2px" width="17" height="12" viewBox="0 0 17 12">
<rect x="0" y="0" width="17" height="11.8" rx="2.6" fill="#d3d5e2"/>
<path d="M6.6 3.4 L11.2 5.9 L6.6 8.4 Z" fill="#232438"/>
</svg>
<svg style="left:1711px;top:15.6px" width="18" height="18" viewBox="0 0 18 18">
<circle cx="9" cy="9" r="8.2" fill="none" stroke="#d3d5e2" stroke-width="1.5"/>
<ellipse cx="9" cy="9" rx="3.8" ry="8.2" fill="none" stroke="#d3d5e2" stroke-width="1.4"/>
<path d="M1.5 6.3 H16.5 M1.5 11.7 H16.5 M9 1 V17" stroke="#d3d5e2" stroke-width="1.4"/>
</svg>
<svg style="left:1740px;top:16px" width="18" height="17" viewBox="0 0 18 17">
<rect x="0" y="0" width="17.5" height="16.8" rx="1.6" fill="#d3d5e2"/>
<rect x="3.1" y="0" width="1.1" height="17" fill="#232438"/>
<rect x="0" y="4.6" width="3.1" height="1.1" fill="#232438"/>
<path d="M4.2 4.8 H12.6 V9.8 H7 V12.6 H17.6" fill="none" stroke="#232438" stroke-width="1.2"/>
</svg>
<svg style="left:1768px;top:17.5px" width="28" height="16" viewBox="0 0 28 16">
<path d="M6.8 0.45 H21.9 L27.1 7.7 L21.1 15 H6.8 L0.3 7.7 Z" fill="#d3d5e2"/>
<path d="M11.9 0 L6.3 7.5 L13.3 15.5" fill="none" stroke="#232438" stroke-width="1.1"/>
<path d="M9.5 3.7 L17.9 12.3 M16.8 2.9 L24.3 10.6" fill="none" stroke="#232438" stroke-width="1.1"/>
</svg>
<svg style="left:1817px;top:9px" width="32" height="32" viewBox="0 0 32 32">
<circle cx="16" cy="16" r="16" fill="#ee4a2b"/>
<path d="M8.4 26.4 C9.2 20.6 12.4 17.6 16.9 17.6 C21.2 17.6 24.6 20.6 25.8 25.4 C22 27.8 12.5 28 8.4 26.4 Z" fill="#111"/><rect x="13.4" y="14.5" width="7" height="4.5" fill="#111"/>
<circle cx="16.8" cy="11.6" r="6.6" fill="#111"/>
<rect x="11.6" y="9" width="10.2" height="5.4" rx="2.4" fill="#f4efd9"/>
<circle cx="14.7" cy="11.8" r="1" fill="#222"/>
<circle cx="18.6" cy="11.8" r="1" fill="#222"/>
<path d="M6.8 16.2 L12.6 20.6" stroke="#111" stroke-width="1.5" stroke-linecap="round"/>
</svg>
<svg style="left:1855px;top:22.5px" width="9" height="5" viewBox="0 0 9 5"><path d="M0.6 0.6 L4.5 4.2 L8.4 0.6" fill="none" stroke="#8a8ea8" stroke-width="1.2"/></svg>
<svg style="left:847px;top:275px" width="12" height="19" viewBox="0 0 12 19">
<path d="M0.5 0.5 V15.5 L4 12.2 L6.6 18 L9 17 L6.5 11.3 H11.3 Z" fill="#fff" stroke="#000" stroke-width="1"/>
</svg>
</body></html>
